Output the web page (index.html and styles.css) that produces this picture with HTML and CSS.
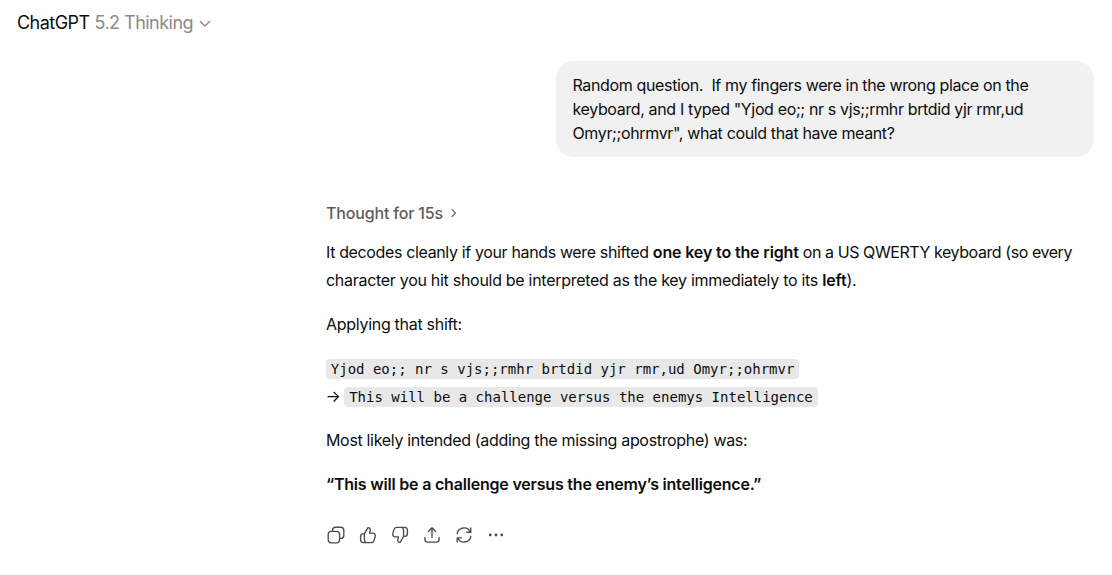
FILE: index.html
```html
<!DOCTYPE html>
<html lang="en">
<head>
  <meta charset="UTF-8" />
  <title>ChatGPT</title>
  <link rel="stylesheet" href="styles.css">
</head>
<body>
  <header class="topbar">
    <span class="brand">ChatGPT</span>
    <span class="model">5.2 Thinking</span>
    <svg class="chevron-down" width="12" height="8" viewBox="0 0 12 8"><path d="M1.4 1.5 6 6.1l4.6-4.6"/></svg>
  </header>

  <main class="thread">
    <div class="bubble">
      <span class="row">Random question.&nbsp; If my fingers were in the wrong place on the</span>
      <span class="row">keyboard, and I typed "Yjod eo;; nr s vjs;;rmhr brtdid yjr rmr,ud</span>
      <span class="row">Omyr;;ohrmvr", what could that have meant?</span>
    </div>

    <div class="thought">
      <span>Thought for 15s</span>
      <svg width="6" height="10" viewBox="0 0 6 10"><path d="M1 1.5 4.500 5 1 8.500"/></svg>
    </div>

    <div class="answer">
      <p>
        <span class="row tight">It decodes cleanly if your hands were shifted <strong>one key to the right</strong><span class="tighter"> on a US QWERTY keyboard (so every</span></span>
        <span class="row">character you hit should be interpreted as the key immediately to its <strong>left</strong>).</span>
      </p>
      <p>Applying that shift:</p>
      <p class="decoded">
        <span class="row"><code>Yjod eo;; nr s vjs;;rmhr brtdid yjr rmr,ud Omyr;;ohrmvr</code></span>
        <span class="row"><span class="arrow">→</span><code>This will be a challenge versus the enemys Intelligence</code></span>
      </p>
      <p class="likely">Most likely intended (adding the missing apostrophe) was:</p>
      <p><strong class="quote">“This will be a challenge versus the enemy’s intelligence.”</strong></p>
    </div>

    <div class="actions">
      <svg viewBox="0 0 20 20"><rect x="2.2" y="6.4" width="11.4" height="11.4" rx="3"/><path d="M6.6 6.2V5.2a3 3 0 0 1 3-3h5.2a3 3 0 0 1 3 3v5.2a3 3 0 0 1-3 3h-1"/></svg>
      <svg viewBox="0 0 20 20"><path d="M6.4 8.6 9.9 2.7c1.7-.1 2.7 1.2 2.3 2.8l-.7 2.6h3.2c1.9 0 3 1.5 2.5 3.3l-1.1 4c-.4 1.4-1.4 2.2-2.8 2.2H5.5c-1.7 0-2.9-1.2-2.9-2.9v-3.200c0-1.700 1.200-2.900 2.900-2.900h.9v6.200c0 1.300.5 2.200 1.500 2.800"/></svg>
      <svg viewBox="0 0 20 20"><path d="M13.600 11.400 10.100 17.300c-1.700.1-2.700-1.200-2.300-2.800l.7-2.600H5.300c-1.900 0-3-1.500-2.500-3.300l1.100-4c.4-1.400 1.400-2.200 2.800-2.200h7.800c1.700 0 2.900 1.200 2.900 2.900v3.200c0 1.700-1.200 2.900-2.900 2.900h-.9V5.200c0-1.300-.5-2.200-1.500-2.800"/></svg>
      <svg viewBox="0 0 20 20"><path d="M10 12.400V2.900M6.300 6.500 10 2.800l3.700 3.700M2.900 12.500v1.700c0 1.700 1.200 2.900 2.900 2.900h8.400c1.700 0 2.900-1.200 2.900-2.900v-1.700"/></svg>
      <svg viewBox="0 0 20 20"><path d="M3.200 8.700A6.900 6.900 0 0 1 16.300 7M16.800 3v4.200h-4.200M16.800 11.300A6.900 6.900 0 0 1 3.700 13M3.200 17v-4.200h4.200"/></svg>
      <svg class="dots" viewBox="0 0 20 20"><circle cx="4.200" cy="10" r="1.400"/><circle cx="10" cy="10" r="1.400"/><circle cx="15.800" cy="10" r="1.400"/></svg>
    </div>
  </main>
</body>
</html>
```

FILE: styles.css
```css
body {
  margin: 0;
  background: #fff;
  color: #0d0d0d;
  font-family: Inter, "Liberation Sans", sans-serif;
  font-size: 16px;
  letter-spacing: -0.29px;
  overflow: hidden;
}

svg {
  fill: none;
  stroke: #4d4d4d;
  stroke-width: 1.35;
  stroke-linecap: round;
  stroke-linejoin: round;
}

.topbar {
  display: flex;
  align-items: center;
  height: 45px;
  padding-left: 17px;
  font-size: 18px;
  letter-spacing: -0.53px;
}

.brand {
  width: 77.5px;
}

.model {
  color: #8a8a8a;
}

.chevron-down {
  margin: 3px 0 0 6px;
  stroke: #8a8a8a;
}

.thread {
  display: flex;
  flex-direction: column;
  margin: 16px 18px 0 326px;
}

.row {
  display: block;
  white-space: nowrap;
}

.bubble {
  align-self: flex-end;
  box-sizing: border-box;
  width: 538px;
  padding: 12px 16px 12px 16.5px;
  border-radius: 18px;
  background: #f1f1f1;
  line-height: 24px;
  letter-spacing: -0.36px;
}

.thought {
  display: flex;
  align-items: center;
  gap: 8px;
  height: 24px;
  margin-top: 44px;
  color: #5d5d5d;
  font-weight: 500;
  letter-spacing: -0.17px;
}

.thought svg {
  stroke: #6d6d6d;
  stroke-width: 1.2;
}

.answer {
  margin-top: 13px;
  line-height: 28px;
}

.answer p {
  margin: 0 0 16px;
  white-space: nowrap;
}

.tight {
  letter-spacing: -0.36px;
}

.tighter {
  letter-spacing: -0.43px;
}

.likely {
  letter-spacing: -0.33px;
}

strong {
  font-weight: 600;
  letter-spacing: -0.14px;
}

.quote {
  letter-spacing: -0.2px;
}

.decoded .row {
  display: flex;
  align-items: center;
  height: 28px;
}

.arrow {
  width: 18.4px;
  text-indent: -0.6px;
}

code {
  margin-top: 2px;
  padding: 0 4.8px;
  border-radius: 4px;
  background: #e8e8e8;
  font-family: "DejaVu Sans Mono", monospace;
  font-size: 14px;
  line-height: 20px;
  letter-spacing: 0;
}

.actions {
  display: flex;
  gap: 12px;
  margin: 11px 0 0;
}

.actions svg {
  width: 20px;
  height: 20px;
}

.actions .dots {
  fill: #4d4d4d;
  stroke: none;
}
```
